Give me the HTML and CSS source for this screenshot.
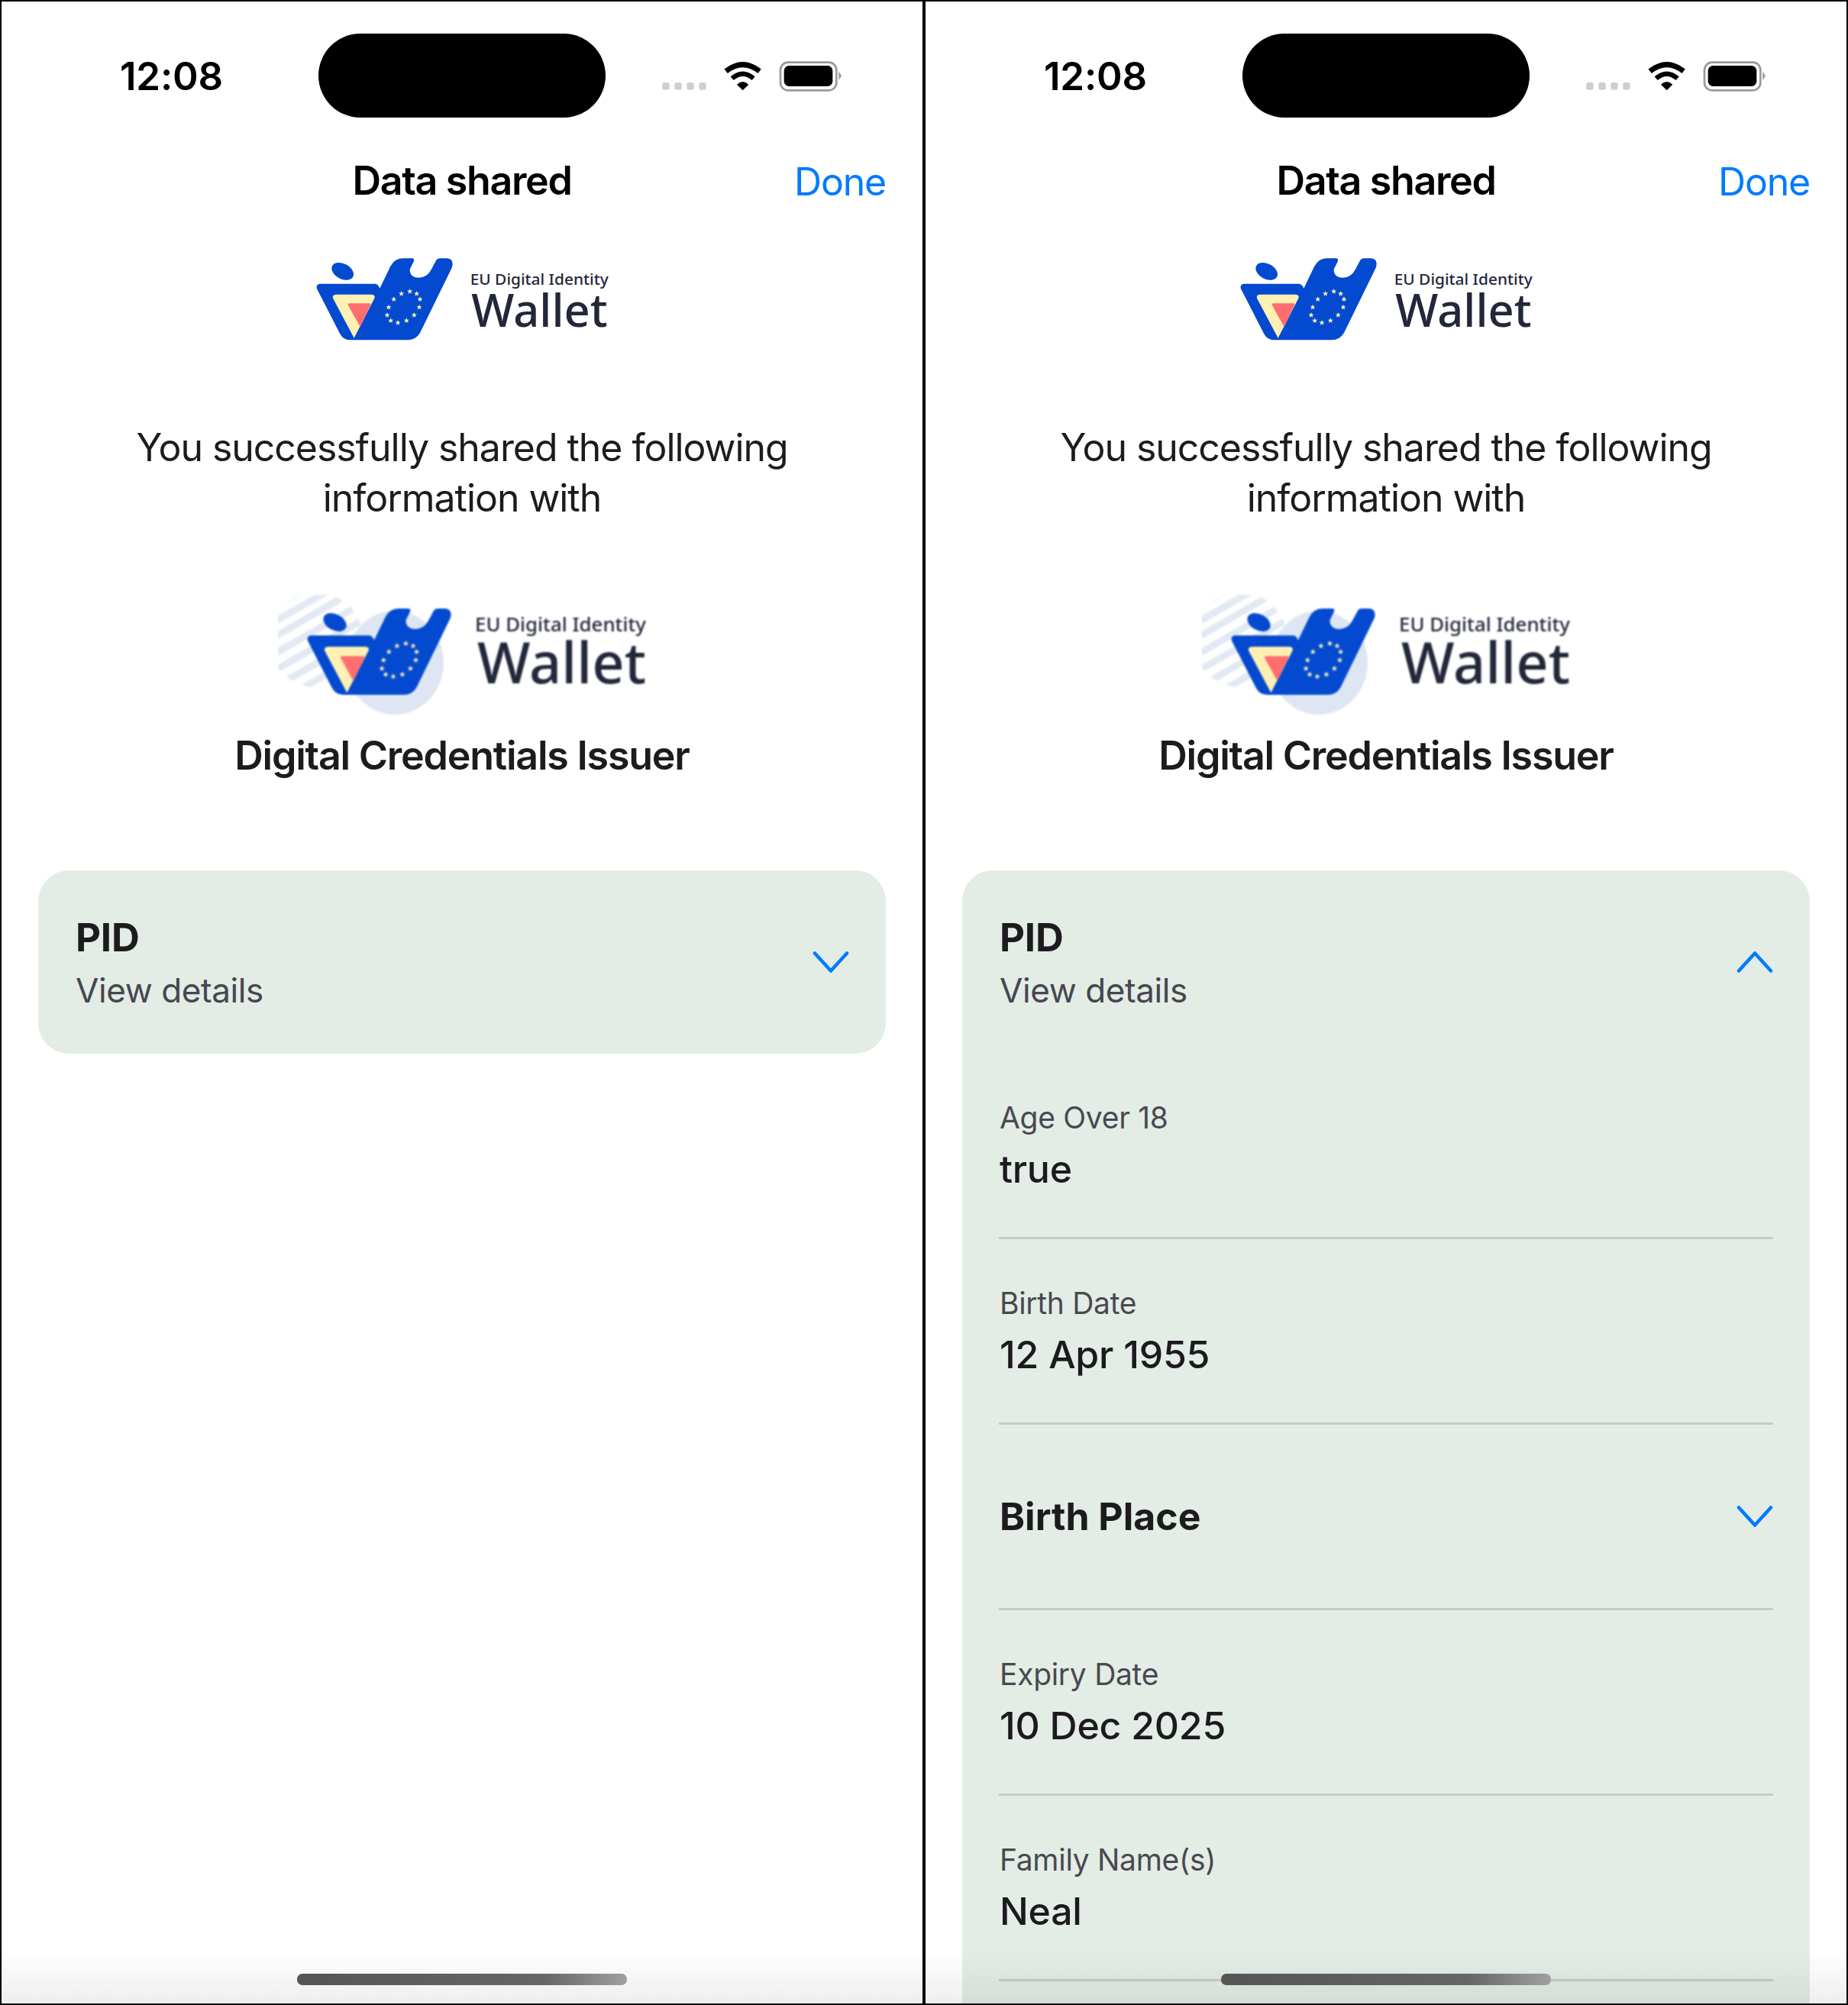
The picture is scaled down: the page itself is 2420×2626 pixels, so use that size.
FILE: index.html
```html
<!DOCTYPE html>
<html lang="en">
<head>
    <meta charset="UTF-8">
    <meta name="viewport" content="width=device-width, initial-scale=1.0">
    <title>Data shared</title>
    <link rel="stylesheet" href="styles.css">
</head>
<body>

    <svg class="sprite" aria-hidden="true">
        <defs>
            <symbol id="mark" viewBox="0 0 1320 450" overflow="visible">
                <ellipse cx="176" cy="136" rx="46" ry="30" transform="rotate(28 176 136)" fill="#034ad1"/>
                <path fill="#034ad1" d="M87 185 L303 185 Q316 186 322 203 L363 118 Q380 85 412 85 L450 85 Q459 86 456 96 L441 126 Q436 150 462 160 Q503 168 524 130 L543 94 Q548 85 560 85 L586 85 Q616 88 605 122 L480 378 Q464 406 430 406 L208 406 Q178 406 165 380 L75 205 Q70 187 87 185 Z"/>
                <path fill="#fff0b4" d="M150 227 L290 227 Q306 229 301 242 L221 398 L139 244 Q132 229 150 227 Z"/>
                <path fill="#ff6e6e" d="M203 262 L282 262 Q288 263 285 270 L245 355 L198 270 Q195 263 203 262 Z"/>
                <g fill="#fff0b4">
                    <use href="#star" x="440" y="215"/>
                    <use href="#star" x="467" y="224"/>
                    <use href="#star" x="480" y="246"/>
                    <use href="#star" x="477" y="277"/>
                    <use href="#star" x="457" y="308"/>
                    <use href="#star" x="427" y="330"/>
                    <use href="#star" x="393" y="338"/>
                    <use href="#star" x="365" y="330"/>
                    <use href="#star" x="351" y="308"/>
                    <use href="#star" x="357" y="277"/>
                    <use href="#star" x="377" y="246"/>
                    <use href="#star" x="407" y="224"/>
                </g>
            </symbol>
            <symbol id="star" overflow="visible">
                <polygon points="0,-11 3,-3.5 10.5,-3.4 4.7,1.4 6.6,9 0,4.8 -6.6,9 -4.7,1.4 -10.5,-3.4 -3,-3.5"/>
            </symbol>
            <symbol id="chevron-down" viewBox="0 0 50 28">
                <path d="M5 2.5 L26 25.5 L47 2.5" fill="none" stroke="currentColor" stroke-width="4.5" stroke-linecap="round" stroke-linejoin="miter"/>
            </symbol>
            <symbol id="chevron-up" viewBox="0 0 50 28">
                <path d="M5 25.5 L26 2.5 L47 25.5" fill="none" stroke="currentColor" stroke-width="4.5" stroke-linecap="round" stroke-linejoin="miter"/>
            </symbol>
            <symbol id="status-icons" viewBox="0 0 900 240">
                <g fill="#cfcfcf">
                    <rect x="82" y="144" width="28" height="29" rx="9"/>
                    <rect x="130" y="144" width="28" height="29" rx="9"/>
                    <rect x="178" y="144" width="28" height="29" rx="9"/>
                    <rect x="226" y="144" width="28" height="29" rx="9"/>
                </g>
                <path d="M332 100 Q398 48 464 100" fill="none" stroke="#000" stroke-width="21"/>
                <path d="M356 128 Q398 92 440 128" fill="none" stroke="#000" stroke-width="19"/>
                <path d="M375 152 Q398 130 421 152 L398 175 Z"/>
                <rect x="546" y="65" width="220" height="110" rx="30" fill="none" stroke="#999" stroke-width="8"/>
                <rect x="560" y="78" width="191" height="81" rx="20"/>
                <path d="M775 100 L786 118 L775 136 Z" fill="#999"/>
            </symbol>
            <symbol id="logo" viewBox="0 0 1320 450">
                <use href="#mark" width="1320" height="450"/>
                <text class="logo-small" x="677" y="188" font-size="60" textLength="543" lengthAdjust="spacingAndGlyphs">EU Digital Identity</text>
                <text class="logo-big" x="682" y="355" font-size="178" textLength="535" lengthAdjust="spacingAndGlyphs">Wallet</text>
            </symbol>
            <symbol id="issuer-logo" viewBox="0 0 482 162">
                <clipPath id="stripe-clip"><circle cx="50" cy="59" r="62"/></clipPath>
                <g clip-path="url(#stripe-clip)" stroke="#e2e9f3" stroke-width="9">
                    <path d="M-30 30 L80 -34"/>
                    <path d="M-30 50 L100 -25"/>
                    <path d="M-30 70 L115 -14"/>
                    <path d="M-30 92 L130 0"/>
                    <path d="M-30 114 L130 22"/>
                    <path d="M-30 136 L130 44"/>
                    <path d="M-30 158 L130 66"/>
                </g>
                <ellipse cx="153" cy="89" rx="64" ry="68" fill="#dde6f2"/>
                <g transform="translate(12.6 -11.9) scale(.352)">
                    <use href="#mark" width="1320" height="450"/>
                </g>
                <text class="logo-small" x="258" y="48" font-size="25" textLength="224" lengthAdjust="spacingAndGlyphs">EU Digital Identity</text>
                <text class="logo-big" x="261" y="116" font-size="74" textLength="221" lengthAdjust="spacingAndGlyphs">Wallet</text>
            </symbol>
        </defs>
    </svg>

    <div class="frame">

        <!-- collapsed -->
        <div class="phone">
            <div class="status-bar">
                <div class="time">12:08</div>
                <div class="island"></div>
                <svg class="status-icons"><use href="#status-icons"/></svg>
            </div>
            <div class="nav">
                <span></span>
                <h1>Data shared</h1>
                <a class="done">Done</a>
            </div>
            <svg class="logo"><use href="#logo"/></svg>
            <p class="message">You successfully shared the following<br>information with</p>
            <svg class="issuer-logo"><use href="#issuer-logo"/></svg>
            <p class="issuer-name">Digital Credentials Issuer</p>
            <div class="card">
                <div class="card-header">
                    <div>
                        <div class="card-title">PID</div>
                        <div class="card-sub">View details</div>
                    </div>
                    <svg class="chevron"><use href="#chevron-down"/></svg>
                </div>
            </div>
            <div class="bottom-fade"></div>
            <div class="home-bar"></div>
        </div>

        <!-- expanded -->
        <div class="phone">
            <div class="status-bar">
                <div class="time">12:08</div>
                <div class="island"></div>
                <svg class="status-icons"><use href="#status-icons"/></svg>
            </div>
            <div class="nav">
                <span></span>
                <h1>Data shared</h1>
                <a class="done">Done</a>
            </div>
            <svg class="logo"><use href="#logo"/></svg>
            <p class="message">You successfully shared the following<br>information with</p>
            <svg class="issuer-logo"><use href="#issuer-logo"/></svg>
            <p class="issuer-name">Digital Credentials Issuer</p>
            <div class="card card-open">
                <div class="card-header">
                    <div>
                        <div class="card-title">PID</div>
                        <div class="card-sub">View details</div>
                    </div>
                    <svg class="chevron"><use href="#chevron-up"/></svg>
                </div>
                <div class="row">
                    <div class="row-label">Age Over 18</div>
                    <div class="row-value">true</div>
                </div>
                <div class="row">
                    <div class="row-label">Birth Date</div>
                    <div class="row-value">12 Apr 1955</div>
                </div>
                <div class="row row-group">
                    <div class="group-title">Birth Place</div>
                    <svg class="chevron"><use href="#chevron-down"/></svg>
                </div>
                <div class="row">
                    <div class="row-label">Expiry Date</div>
                    <div class="row-value">10 Dec 2025</div>
                </div>
                <div class="row">
                    <div class="row-label">Family Name(s)</div>
                    <div class="row-value">Neal</div>
                </div>
            </div>
            <div class="bottom-fade"></div>
            <div class="home-bar"></div>
        </div>

    </div>

</body>
</html>
```

FILE: styles.css
```css
body {
    margin: 0;
    background-color: #000;
    font-family: Inter, "Liberation Sans", sans-serif;
}
.sprite {
    display: block;
    width: 0;
    height: 0;
}
.logo-small,
.logo-big {
    font-family: "Noto Sans", sans-serif;
    font-weight: 500;
    fill: #22273a;
}
.frame {
    display: grid;
    grid-template-columns: 1206px 1206px;
    gap: 4px;
    padding: 2px;
    height: 2622px;
    overflow: hidden;
}
.phone {
    position: relative;
    display: flex;
    flex-direction: column;
    height: 2622px;
    overflow: hidden;
    background-color: #fff;
}
.status-bar {
    display: grid;
    grid-template-columns: 415px 376px 1fr;
    flex: none;
    margin-top: 42px;
    height: 110px;
}
.time {
    padding: 2px 0 0 155px;
    align-self: center;
    font-size: 51px;
    line-height: 60px;
    font-weight: 600;
    letter-spacing: -0.2px;
    color: #000;
}
.island {
    background-color: #000;
    border-radius: 55px;
}
.status-icons {
    width: 300px;
    height: 80px;
    margin: 16px 0 0 47px;
}
.nav {
    display: grid;
    grid-template-columns: 1fr auto 1fr;
    align-items: center;
    flex: none;
    margin-top: 50px;
    padding: 0 48px;
    height: 62px;
}
.nav h1 {
    margin: 0;
    font-size: 52px;
    font-weight: 600;
    letter-spacing: -1.35px;
    color: #000;
}
.done {
    justify-self: end;
    padding-top: 4px;
    font-size: 50px;
    letter-spacing: -1.2px;
    color: #007aff;
}
.logo {
    flex: none;
    align-self: center;
    width: 440px;
    height: 150px;
    margin: 44px 0 0 10px;
}
.message {
    margin: 93px 0 0;
    font-size: 50px;
    line-height: 66px;
    letter-spacing: -1.05px;
    text-align: center;
    color: #1c1c1e;
}
.issuer-logo {
    flex: none;
    align-self: center;
    width: 482px;
    height: 162px;
    margin-top: 94px;
    filter: blur(1.3px);
}
.issuer-name {
    margin: 16px 0 0;
    font-size: 52px;
    line-height: 66px;
    font-weight: 600;
    letter-spacing: -1.25px;
    text-align: center;
    color: #1c1c1e;
}
.card {
    flex: none;
    margin: 117px 48px 0;
    padding: 0 48px;
    background-color: #e3ede6;
    border-radius: 40px;
}
.card-open {
    padding-bottom: 120px;
}
.card-header {
    display: flex;
    justify-content: space-between;
    align-items: center;
    height: 240px;
}
.card-title {
    margin: 1px 0 -1px 1px;
    font-size: 51px;
    line-height: 60px;
    font-weight: 700;
    letter-spacing: -0.2px;
    color: #1c1c1e;
}
.card-sub {
    margin: 13px 0 0 1px;
    font-size: 44px;
    line-height: 54px;
    letter-spacing: -0.4px;
    color: #48464f;
}
.chevron {
    width: 50px;
    height: 28px;
    color: #007aff;
}
.row {
    box-sizing: border-box;
    height: 243px;
    padding-top: 62px;
    border-bottom: 3px solid #c5ccc8;
}
.row-label {
    margin-left: 1px;
    font-size: 39px;
    line-height: 44px;
    letter-spacing: -0.3px;
    color: #4a4850;
}
.row-value {
    margin: 15px 0 0 1px;
    font-size: 50px;
    line-height: 60px;
    font-weight: 500;
    letter-spacing: -0.25px;
    color: #1c1a1f;
}
.row-group {
    display: flex;
    justify-content: space-between;
    align-items: center;
    padding-top: 0;
}
.group-title {
    margin-left: 1px;
    font-size: 50px;
    font-weight: 700;
    color: #1c1c1e;
}
.bottom-fade {
    position: absolute;
    left: 0;
    right: 0;
    bottom: 0;
    height: 70px;
    background: linear-gradient(rgba(0, 0, 0, 0), rgba(0, 0, 0, 0.065));
}
.home-bar {
    position: absolute;
    left: 387px;
    bottom: 24px;
    width: 432px;
    height: 15px;
    border-radius: 7px;
    background: linear-gradient(90deg, #555 0%, #666 75%, #a0a0a0 100%);
}
```
